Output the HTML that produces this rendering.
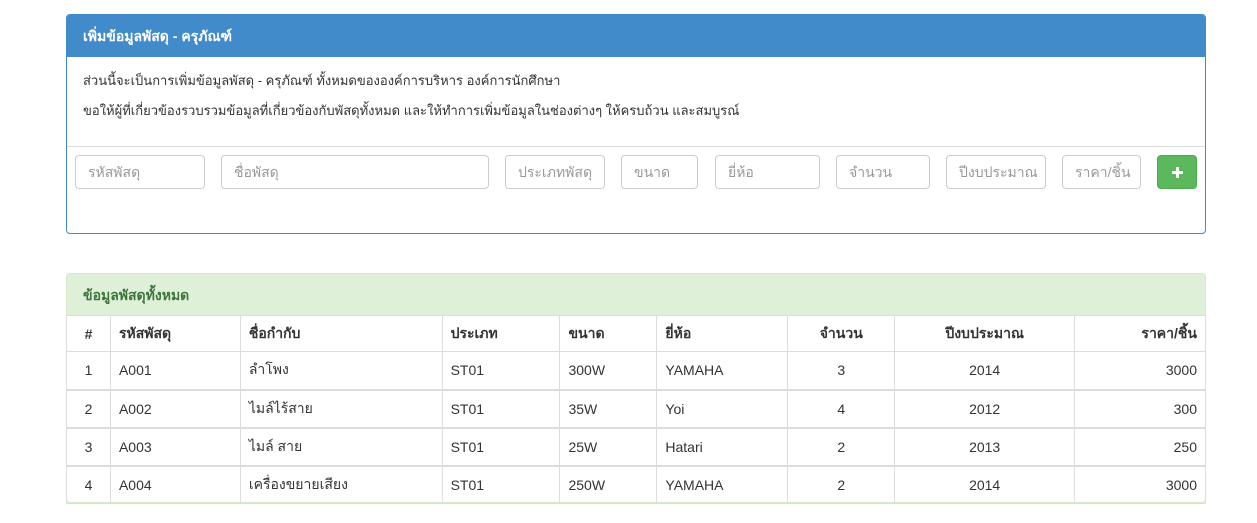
<!DOCTYPE html>
<html><head><meta charset="utf-8"><style>
body{margin:0;background:#fff;font-family:"Liberation Sans","DejaVu Sans","Noto Sans CJK SC",sans-serif;font-size:14px;color:#333;}
.p{position:absolute;left:66px;width:1140px;border:1px solid #428bca;border-radius:4px;overflow:hidden;box-sizing:border-box}
.h{height:42px;line-height:42px;padding-left:16px;font-weight:bold;font-size:14px}
.in{position:absolute;top:155px;height:34px;border:1px solid #ccc;border-radius:4px;box-sizing:border-box;color:#999;font-size:14px;line-height:32px;padding-left:12px}
table{border-collapse:collapse;position:absolute;left:66px;top:315px;width:1140px}
td,th{border:1px solid #ddd;padding:0 8px;height:36px;box-sizing:border-box;text-align:left}
th{font-weight:bold}
tbody tr{height:38px}
tbody tr+tr td{border-top:2px solid #ddd}
.c,td:first-child,th:first-child{text-align:center}.r{text-align:right}
</style></head><body>
<div class="p" style="top:14px;height:220px">
<div class="h" style="background:#428bca;color:#fff">เพิ่มข้อมูลพัสดุ - ครุภัณฑ์</div>
<div style="position:absolute;left:16px;top:51px;line-height:30px;font-size:13px">ส่วนนี้จะเป็นการเพิ่มข้อมูลพัสดุ - ครุภัณฑ์ ทั้งหมดขององค์การบริหาร องค์การนักศึกษา<br>ขอให้ผู้ที่เกี่ยวข้องรวบรวมข้อมูลที่เกี่ยวข้องกับพัสดุทั้งหมด และให้ทำการเพิ่มข้อมูลในช่องต่างๆ ให้ครบถ้วน และสมบูรณ์</div>
<div style="position:absolute;left:0;right:0;top:131px;border-top:1px solid #ddd"></div>
</div>
<div class="in" style="left:75px;width:130px">รหัสพัสดุ</div>
<div class="in" style="left:221px;width:268px">ชื่อพัสดุ</div>
<div class="in" style="left:505px;width:100px">ประเภทพัสดุ</div>
<div class="in" style="left:621px;width:77px">ขนาด</div>
<div class="in" style="left:715px;width:105px">ยี่ห้อ</div>
<div class="in" style="left:836px;width:94px">จำนวน</div>
<div class="in" style="left:946px;width:100px">ปีงบประมาณ</div>
<div class="in" style="left:1062px;width:79px">ราคา/ชิ้น</div>
<div style="position:absolute;left:1157px;top:155px;width:40px;height:34px;background:#5cb85c;border:1px solid #4cae4c;border-radius:4px;box-sizing:border-box">
<div style="position:absolute;left:14px;top:15px;width:11px;height:3px;background:#fff"></div>
<div style="position:absolute;left:18px;top:11px;width:3px;height:11px;background:#fff"></div></div>
<div class="p" style="top:273px;height:230px;border-color:#d6e9c6">
<div class="h" style="background:#dff0d8;color:#3c763d">ข้อมูลพัสดุทั้งหมด</div></div>
<table>
<colgroup><col style="width:44px"><col style="width:130px"><col style="width:202px"><col style="width:118px"><col style="width:97px"><col style="width:131px"><col style="width:107px"><col style="width:180px"><col style="width:131px"></colgroup>
<thead><tr><th>#</th><th>รหัสพัสดุ</th><th>ชื่อกำกับ</th><th>ประเภท</th><th>ขนาด</th><th>ยี่ห้อ</th><th class="c">จำนวน</th><th class="c">ปีงบประมาณ</th><th class="r">ราคา/ชิ้น</th></tr></thead>
<tbody>
<tr><td>1</td><td>A001</td><td>ลำโพง</td><td>ST01</td><td>300W</td><td>YAMAHA</td><td class="c">3</td><td class="c">2014</td><td class="r">3000</td></tr>
<tr><td>2</td><td>A002</td><td>ไมล์ไร้สาย</td><td>ST01</td><td>35W</td><td>Yoi</td><td class="c">4</td><td class="c">2012</td><td class="r">300</td></tr>
<tr><td>3</td><td>A003</td><td>ไมล์ สาย</td><td>ST01</td><td>25W</td><td>Hatari</td><td class="c">2</td><td class="c">2013</td><td class="r">250</td></tr>
<tr><td>4</td><td>A004</td><td>เครื่องขยายเสียง</td><td>ST01</td><td>250W</td><td>YAMAHA</td><td class="c">2</td><td class="c">2014</td><td class="r">3000</td></tr>
</tbody></table>
</body></html>
